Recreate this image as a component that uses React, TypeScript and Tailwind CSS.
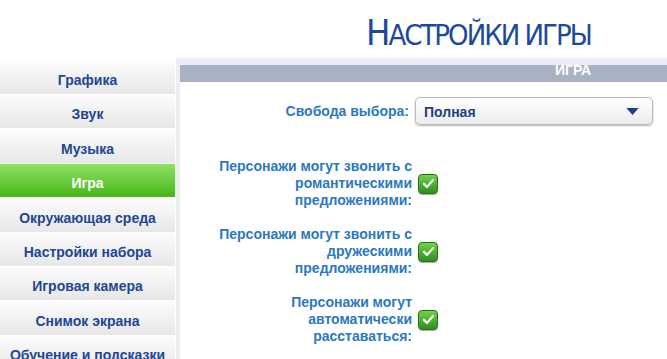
import React from "react";

const menu = [
  "Графика",
  "Звук",
  "Музыка",
  "Игра",
  "Окружающая среда",
  "Настройки набора",
  "Игровая камера",
  "Снимок экрана",
  "Обучение и подсказки",
];

const toggles: string[][] = [
  ["Персонажи могут звонить с", "романтическими", "предложениями:"],
  ["Персонажи могут звонить с", "дружескими", "предложениями:"],
  ["Персонажи могут", "автоматически", "расставаться:"],
];

function CheckBox() {
  return (
    <div className="w-[20px] h-[20px] rounded-[4px] border border-[#2d6e1c] bg-gradient-to-b from-[#6fd447] to-[#2f8f1f] shadow-[0_1px_1px_rgba(0,0,0,0.35)] flex items-center justify-center">
      <svg viewBox="0 0 20 20" className="w-[15px] h-[15px]">
        <path
          d="M4 10.5l4 4 8-9"
          fill="none"
          stroke="white"
          strokeWidth={3}
          strokeLinecap="round"
          strokeLinejoin="round"
        />
      </svg>
    </div>
  );
}

export default function App() {
  return (
    <div className="w-[667px] h-[359px] overflow-hidden bg-white font-['Liberation_Sans',Arial,sans-serif]">
      {/* Title */}
      <div className="h-[58px] pl-[366px] pt-[15px]">
        <h1 className="text-[#1b4a9d] leading-[36px] tracking-[-2px] whitespace-nowrap font-['Liberation_Sans_Narrow','DejaVu_Sans_Condensed',sans-serif]">
          <span className="text-[36px]">Н</span>
          <span className="text-[29px]">АСТРОЙКИ ИГРЫ</span>
        </h1>
      </div>

      <div className="flex">
        {/* Sidebar */}
        <div className="w-[175px] pt-[3px] flex flex-col gap-[1.4px] shrink-0">
          {menu.map((item) => {
            const active = item === "Игра";
            return (
              <div
                key={item}
                className={
                  active
                    ? "h-[33px] flex items-center justify-center pt-[6px] text-[14px] font-bold text-white bg-gradient-to-b from-[#8ee15f] to-[#45b515]"
                    : "h-[33px] flex items-center justify-center pt-[6px] text-[14px] font-bold text-[#1e4796] bg-gradient-to-b from-[#fcfcfc] to-[#e7e7e7] whitespace-nowrap"
                }
              >
                {item}
              </div>
            );
          })}
        </div>

        {/* Panel */}
        <div className="ml-[1px] flex-1 h-[301px] border-l-[4px] border-t-[7px] border-[#eceef4] bg-white min-w-[500px]">
          <div className="h-[17px] bg-[#a8b2c3] pl-[375px]">
            <span className="text-[14px] leading-[10px] font-bold text-white block">
              ИГРА
            </span>
          </div>

          <div className="flex items-center mt-[15px]">
            <div className="w-[229px] text-right text-[14px] font-bold text-[#2b78c0]">
              Свобода выбора:
            </div>
            <div className="ml-[6px] w-[238px] h-[28px] rounded-[5px] border border-[#b9bcc2] bg-gradient-to-b from-white to-[#ececec] shadow-[0_1px_2px_rgba(0,0,0,0.3)] flex items-center justify-between pl-[8px] pr-[13px]">
              <span className="text-[14px] font-bold text-[#1d3f82] pt-[2px]">Полная</span>
              <svg viewBox="0 0 14 8" className="w-[13px] h-[7px]">
                <path d="M0 0h14L7 8z" fill="#1d3f82" />
              </svg>
            </div>
          </div>

          <div className="mt-[33px] flex flex-col gap-[17px]">
            {toggles.map((lines, i) => (
              <div key={i} className="flex items-center">
                <div className="w-[232px] text-right text-[14px] leading-[17px] font-bold text-[#2b78c0]">
                  {lines.map((l) => (
                    <div key={l}>{l}</div>
                  ))}
                </div>
                <div className="ml-[6px]">
                  <CheckBox />
                </div>
              </div>
            ))}
          </div>
        </div>
      </div>
    </div>
  );
}
